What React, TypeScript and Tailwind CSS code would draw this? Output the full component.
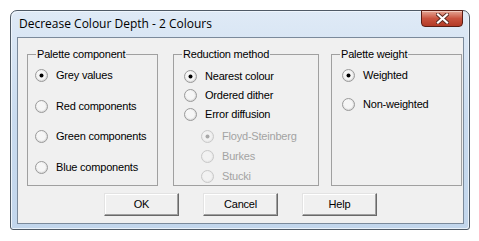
import React from "react";

type Opt = { label: string; checked?: boolean; disabled?: boolean };

const Radio = ({ checked, disabled }: { checked?: boolean; disabled?: boolean }) => (
  <svg width="13" height="13" viewBox="0 0 13 13" className="shrink-0">
    <defs>
      <radialGradient id={disabled ? "rgd" : "rg"} cx="0.35" cy="0.3" r="0.8">
        <stop offset="0" stopColor={disabled ? "#f4f4f4" : "#ffffff"} />
        <stop offset="1" stopColor={disabled ? "#e6e6e6" : "#d8d8d8"} />
      </radialGradient>
    </defs>
    <circle cx="6.5" cy="6.5" r="6" fill={`url(#${disabled ? "rgd" : "rg"})`} stroke={disabled ? "#c8c8c8" : "#9a9a9a"} strokeWidth="1" />
    <circle cx="6.5" cy="6.5" r="4.3" fill={disabled ? "#f2f2f2" : "#f6f6f6"} />
    {checked && <circle cx="6.5" cy="6.5" r="2" fill={disabled ? "#a8a8a8" : "#000"} />}
  </svg>
);

const Row = ({ o }: { o: Opt }) => (
  <div className={`flex items-center gap-[8px] h-[19px] ${o.disabled ? "text-[#a3a3a3]" : "text-black"}`}>
    <Radio checked={o.checked} disabled={o.disabled} />
    <span>{o.label}</span>
  </div>
);

const Group = ({
  title,
  className,
  inner,
  children,
}: {
  title: string;
  className: string;
  inner: string;
  children: React.ReactNode;
}) => (
  <fieldset className={`border border-[#a0a0a0] h-[138px] ${className}`}>
    <legend className="ml-[8px] px-[1px] leading-[13px]">{title}</legend>
    <div className={inner}>{children}</div>
  </fieldset>
);

const Btn = ({ label }: { label: string }) => (
  <button className="w-[75px] h-[23px] bg-[#f0f0f0] border border-t-[#e3e3e3] border-l-[#e3e3e3] border-r-[#696969] border-b-[#696969] shadow-[inset_-1px_-1px_0_#a0a0a0,inset_1px_1px_0_#ffffff] text-black">
    {label}
  </button>
);

export default function App() {
  return (
    <div className="w-[479px] h-[241px] bg-white pt-[10px] pl-[10px]">
      <div className="w-[460px] h-[220px] border border-[#4f5a66] rounded-t-[7px] rounded-b-[3px] bg-gradient-to-b from-[#dfeaf6] via-[#c9dbef] to-[#c2d6ec] shadow-[inset_1px_1px_0_#eef5fc,inset_-1px_-1px_0_#eaf2fa] flex flex-col">
        <div className="h-[26px] flex items-start justify-between pl-[8px] pr-[6px]">
          <div className="pt-[5px] text-[12px] leading-[15px] text-black font-['Open_Sans','Liberation_Sans',sans-serif]">
            Decrease Colour Depth - 2 Colours
          </div>
          <div className="w-[42px] h-[17px] -mt-px rounded-b-[4px] border border-[#5a1d14] bg-gradient-to-b from-[#e3a595] via-[#c9533f] to-[#b23a26] shadow-[inset_0_1px_0_#f2c8bc] flex items-center justify-center">
            <svg width="13" height="11" viewBox="0 0 13 11">
              <path d="M2 1.5 L11 9.5 M11 1.5 L2 9.5" stroke="#5b2a22" strokeWidth="4" strokeLinecap="square" />
              <path d="M2 1.5 L11 9.5 M11 1.5 L2 9.5" stroke="#ffffff" strokeWidth="2.2" strokeLinecap="square" />
            </svg>
          </div>
        </div>
        <div className="ml-[6px] w-[447px] h-[187px] border border-[#7b8a9b] bg-[#f0f0f0] text-[11px] leading-[13px] tracking-[-0.2px] font-['Liberation_Sans',Arial,sans-serif] flex flex-col">
          <div className="flex pt-[10px] pl-[9px]">
            <Group title="Palette component" className="w-[131px]" inner="pl-[7px] pt-[5px] flex flex-col gap-[11.7px]">
              <Row o={{ label: "Grey values", checked: true }} />
              <Row o={{ label: "Red components" }} />
              <Row o={{ label: "Green components" }} />
              <Row o={{ label: "Blue components" }} />
            </Group>
            <Group title="Reduction method" className="w-[146px] ml-[15px]" inner="pl-[10px] pt-[6px]">
              <Row o={{ label: "Nearest colour", checked: true }} />
              <Row o={{ label: "Ordered dither" }} />
              <Row o={{ label: "Error diffusion" }} />
              <div className="pl-[17px] pt-[3px] flex flex-col gap-[1px]">
                <Row o={{ label: "Floyd-Steinberg", checked: true, disabled: true }} />
                <Row o={{ label: "Burkes", disabled: true }} />
                <Row o={{ label: "Stucki", disabled: true }} />
              </div>
            </Group>
            <Group title="Palette weight" className="w-[131px] ml-[12px]" inner="pl-[10px] pt-[5px] flex flex-col gap-[10px]">
              <Row o={{ label: "Weighted", checked: true }} />
              <Row o={{ label: "Non-weighted" }} />
            </Group>
          </div>
          <div className="flex pl-[86px] gap-[24px] mt-[7px]">
            <Btn label="OK" />
            <Btn label="Cancel" />
            <Btn label="Help" />
          </div>
        </div>
      </div>
    </div>
  );
}
